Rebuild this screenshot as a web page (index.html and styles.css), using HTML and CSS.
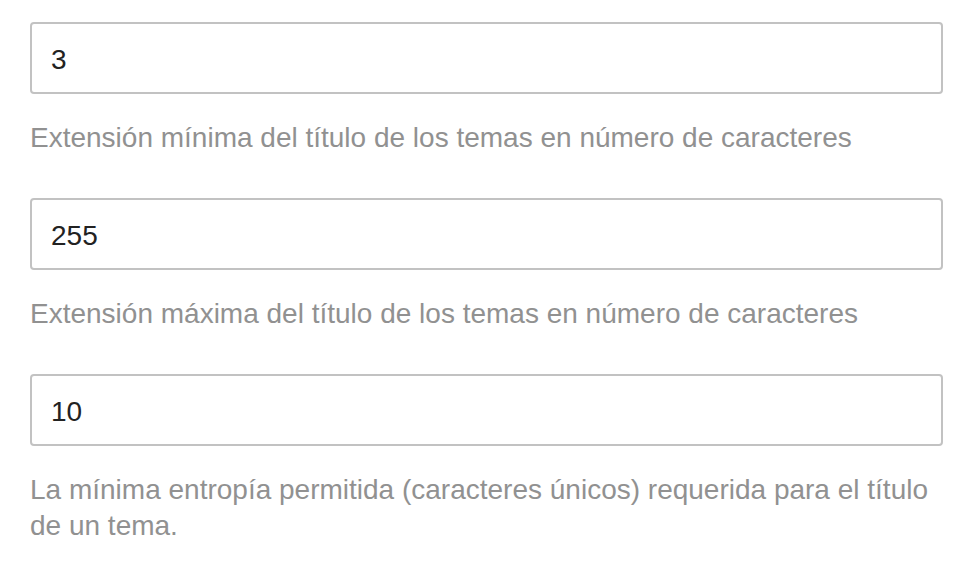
FILE: index.html
```html
<!DOCTYPE html>
<html lang="es">
<head>
    <meta charset="UTF-8">
    <meta name="viewport" content="width=device-width, initial-scale=1.0">
    <title>Ajustes de temas</title>
    <link rel="stylesheet" href="styles.css">
</head>
<body>
    <!-- Topic title settings -->
    <div class="settings">
        <div class="setting">
            <input type="text" class="setting-input" value="3">
            <p class="setting-desc">Extensión mínima del título de los temas en número de caracteres</p>
        </div>

        <div class="setting">
            <input type="text" class="setting-input" value="255">
            <p class="setting-desc">Extensión máxima del título de los temas en número de caracteres</p>
        </div>

        <div class="setting">
            <input type="text" class="setting-input" value="10">
            <p class="setting-desc">La mínima entropía permitida (caracteres únicos) requerida para el título de un tema.</p>
        </div>
    </div>
</body>
</html>
```

FILE: styles.css
```css
body {
    margin: 0;
    padding: 22px 27px 0 30px;
    font-family: "Liberation Sans", Arial, sans-serif;
    background-color: white;
    color: #222;
}
/* Settings list */
.settings {
    display: flex;
    flex-direction: column;
    gap: 42px;
}
.setting {
    display: flex;
    flex-direction: column;
}
.setting-input {
    box-sizing: border-box;
    width: 100%;
    height: 72px;
    margin: 0;
    padding: 3px 19px 0;
    border: 2px solid #c2c2c2;
    border-radius: 4px;
    font-family: inherit;
    font-size: 28px;
    color: #222;
    background-color: white;
    outline: none;
}
.setting-desc {
    margin: 26px 0 0;
    font-size: 28px;
    line-height: 36px;
    color: #919191;
}
```
